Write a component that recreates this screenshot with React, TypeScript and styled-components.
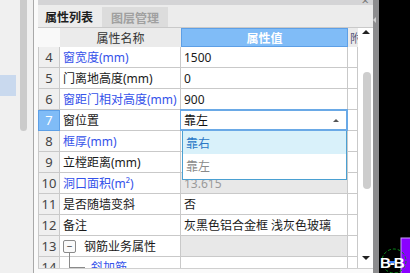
import styled, { createGlobalStyle } from "styled-components";

const GlobalStyle = createGlobalStyle`
  html, body {
    margin: 0;
    padding: 0;
    width: 410px;
    height: 273px;
    overflow: hidden;
    background: #f0f0f0;
  }
  body {
    font-family: "Noto Sans", "Noto Sans CJK SC", sans-serif;
    font-size: 12px;
  }
`;

type Row = {
  no: number;
  name: string;
  value?: string;
  blue?: boolean;
  muted?: boolean;
  group?: boolean;
  child?: boolean;
  select?: boolean;
};

const rows: Row[] = [
  { no: 4, name: "窗宽度(mm)", value: "1500", blue: true },
  { no: 5, name: "门离地高度(mm)", value: "0" },
  { no: 6, name: "窗距门相对高度(mm)", value: "900", blue: true },
  { no: 7, name: "窗位置", value: "靠左", select: true },
  { no: 8, name: "框厚(mm)", blue: true },
  { no: 9, name: "立樘距离(mm)" },
  { no: 10, name: "洞口面积(m²)", value: "13.615", blue: true, muted: true },
  { no: 11, name: "是否随墙变斜", value: "否" },
  { no: 12, name: "备注", value: "灰黑色铝合金框 浅灰色玻璃" },
  { no: 13, name: "钢筋业务属性", group: true, muted: true },
  { no: 14, name: "斜加筋", blue: true, child: true },
];

export default function App() {
  return (
    <Screen>
      <GlobalStyle />
      <LeftGutter>
        <GutterPane>
          <SelectedItem />
        </GutterPane>
        <GutterScroll />
        <GutterLine />
      </LeftGutter>

      <Panel>
        <TitleStrip>
          <CloseMark>×</CloseMark>
        </TitleStrip>
        <TabBar>
          <Tab $active>属性列表</Tab>
          <Tab>图层管理</Tab>
        </TabBar>

        <Body>
          <Table>
            <HeaderRow>
              <HeadCell $tone="plain" />
              <HeadCell $tone="gray">属性名称</HeadCell>
              <HeadCell $tone="blue">属性值</HeadCell>
              <HeadCell $tone="gray">附加</HeadCell>
            </HeaderRow>

            {rows.map((r) => (
              <GridRow key={r.no}>
                <IndexCell $active={r.select}>{r.no}</IndexCell>
                <NameCell $blue={r.blue} $child={r.child}>
                  {r.group && <Expander>−</Expander>}
                  {r.group && <TreeDown />}
                  {r.child && <TreeElbow />}
                  {r.name}
                </NameCell>
                <ValueCell $muted={r.muted}>
                  {r.select ? (
                    <>
                      <SelectBox>
                        {r.value}
                        <SelectArrow />
                      </SelectBox>
                      <DropList>
                        <DropItem $hover>靠右</DropItem>
                        <DropItem>靠左</DropItem>
                      </DropList>
                    </>
                  ) : (
                    r.value
                  )}
                </ValueCell>
                <ExtraCell />
              </GridRow>
            ))}
          </Table>

          <VScroll>
            <ScrollHead>
              <ArrowUp />
            </ScrollHead>
            <ScrollTrack>
              <Thumb />
            </ScrollTrack>
            <ScrollFoot>
              <ArrowDown />
            </ScrollFoot>
          </VScroll>
        </Body>
        <BottomStrip />
      </Panel>

      <Divider>
        <Notch />
      </Divider>

      <Canvas>
        <svg width="31" height="273" viewBox="0 0 31 273">
          <rect x="0" y="0" width="31" height="273" fill="#000" />
          <rect x="22" y="238" width="10" height="36" fill="#8a00ff" stroke="#c9a0ff" strokeWidth="1" />
          <circle cx="15" cy="261" r="12" fill="none" stroke="#0b8f1c" strokeWidth="1" strokeDasharray="3 2" />
          <line x1="9" y1="262" x2="17" y2="262" stroke="#3a7bff" strokeWidth="2" />
          <text x="1" y="268" fill="#fff" fontFamily="Liberation Sans" fontWeight="bold" fontSize="15" letterSpacing="-1">
            B-B
          </text>
        </svg>
      </Canvas>
    </Screen>
  );
}

const Screen = styled.div`
  display: flex;
  width: 410px;
  height: 273px;
  overflow: hidden;
`;

/* ---------- left gutter ---------- */

const LeftGutter = styled.div`
  display: flex;
  width: 38px;
  height: 273px;
  background: #f0f0f0;
`;

const GutterPane = styled.div`
  width: 20px;
  padding-top: 75px;
`;

const SelectedItem = styled.div`
  width: 16px;
  height: 21px;
  background: #c9d9ee;
`;

const GutterScroll = styled.div`
  width: 7px;
  height: 131px;
  background: #cbcbcb;
  border-radius: 0 0 4px 4px;
`;

const GutterLine = styled.div`
  width: 4px;
  margin-left: 6px;
  height: 273px;
  border-left: 1px solid #a9a9a9;
  background: #fafafa;
`;

/* ---------- panel ---------- */

const Panel = styled.div`
  display: flex;
  flex-direction: column;
  width: 335px;
  height: 273px;
  background: #fff;
`;

const TitleStrip = styled.div`
  position: relative;
  height: 5px;
  background: #d4d4d6;
  overflow: hidden;
`;

const CloseMark = styled.span`
  position: absolute;
  right: 4px;
  top: -9px;
  font-size: 13px;
  color: #777;
`;

const TabBar = styled.div`
  display: flex;
  align-items: flex-end;
  height: 22px;
  background: #ececec;
  border-bottom: 1px solid #c9c9c9;
`;

const Tab = styled.div<{ $active?: boolean }>`
  display: flex;
  align-items: center;
  justify-content: center;
  height: ${(p) => (p.$active ? "22px" : "20px")};
  width: ${(p) => (p.$active ? "62px" : "66px")};
  margin-right: 2px;
  box-sizing: border-box;
  background: ${(p) => (p.$active ? "#ececec" : "#dcdcdc")};
  color: ${(p) => (p.$active ? "#1e1e1e" : "#a0a0a0")};
  font-family: "Noto Sans CJK SC", sans-serif;
  font-weight: 600;
  font-size: 12px;
`;

const Body = styled.div`
  display: flex;
  height: 240px;
  overflow: hidden;
`;

const Table = styled.div`
  width: 320px;
  height: 240px;
  overflow: hidden;
  position: relative;
`;

const cols = "22px 121px 167px 10px";

const HeaderRow = styled.div`
  display: grid;
  grid-template-columns: ${cols};
  height: 19px;
`;

const HeadCell = styled.div<{ $tone: "plain" | "gray" | "blue" }>`
  display: flex;
  align-items: center;
  justify-content: ${(p) => (p.$tone === "blue" || p.$tone === "gray" ? "center" : "flex-start")};
  overflow: hidden;
  white-space: nowrap;
  box-sizing: border-box;
  font-family: "Noto Sans CJK SC", sans-serif;
  font-size: 12px;
  background: ${(p) => (p.$tone === "blue" ? "#80bcf7" : p.$tone === "gray" ? "#ebebeb" : "#f9f9f9")};
  color: ${(p) => (p.$tone === "blue" ? "#fff" : "#333")};
  font-weight: ${(p) => (p.$tone === "blue" ? 600 : 400)};
  border: ${(p) => (p.$tone === "blue" ? "1px solid #5d9fe6" : "none")};
  &:last-child {
    justify-content: flex-start;
    padding-left: 2px;
    color: #5a5a7a;
  }
`;

const GridRow = styled.div`
  display: grid;
  grid-template-columns: ${cols};
  height: 21px;
`;

const cellBase = `
  display: flex;
  align-items: center;
  box-sizing: border-box;
  height: 21px;
  border-right: 1px solid #c9c9c9;
  border-bottom: 1px solid #c9c9c9;
  white-space: nowrap;
`;

const IndexCell = styled.div<{ $active?: boolean }>`
  ${cellBase}
  justify-content: center;
  border-left: 1px solid #c9c9c9;
  font-size: 13px;
  background: ${(p) => (p.$active ? "#80bcf7" : "#efefef")};
  color: ${(p) => (p.$active ? "#fff" : "#444")};
  ${(p) => p.$active && "outline: 1px solid #5d9fe6; outline-offset: -1px;"}
`;

const NameCell = styled.div<{ $blue?: boolean; $child?: boolean }>`
  ${cellBase}
  position: relative;
  padding-left: ${(p) => (p.$child ? "31px" : "3px")};
  color: ${(p) => (p.$blue ? "#3552ea" : "#1a1a1a")};
  background: #fff;
`;

const ValueCell = styled.div<{ $muted?: boolean }>`
  ${cellBase}
  position: relative;
  padding-left: 3px;
  background: ${(p) => (p.$muted ? "#e8e8e8" : "#fff")};
  color: ${(p) => (p.$muted ? "#9a9a9a" : "#1a1a1a")};
`;

const ExtraCell = styled.div`
  ${cellBase}
  background: #fff;
`;

const Expander = styled.span`
  display: inline-flex;
  align-items: center;
  justify-content: center;
  width: 11px;
  height: 11px;
  margin-right: 8px;
  border: 1px solid #8a8a8a;
  border-radius: 2px;
  font-size: 10px;
  line-height: 1;
  color: #333;
  background: #fafafa;
`;

const TreeDown = styled.span`
  position: absolute;
  left: 9px;
  top: 17px;
  height: 6px;
  border-left: 1px solid #8a8a8a;
`;

const TreeElbow = styled.span`
  position: absolute;
  left: 9px;
  top: -1px;
  width: 15px;
  height: 11px;
  border-left: 1px solid #8a8a8a;
  border-bottom: 1px solid #8a8a8a;
`;

const SelectBox = styled.div`
  position: absolute;
  z-index: 2;
  left: -1px;
  top: -1px;
  right: -1px;
  bottom: -1px;
  display: flex;
  align-items: center;
  padding-left: 3px;
  background: #fff;
  color: #111;
  border: 2px solid #6aa9e6;
  border-left-width: 1px;
`;

const SelectArrow = styled.span`
  position: absolute;
  right: 7px;
  top: 8px;
  width: 0;
  height: 0;
  border-left: 3px solid transparent;
  border-right: 3px solid transparent;
  border-bottom: 3px solid #555;
`;

const DropList = styled.div`
  position: absolute;
  z-index: 3;
  left: 1px;
  top: 21px;
  width: 165px;
  height: 49px;
  box-sizing: border-box;
  background: #fff;
  border: 1px solid #4aa0d2;
  border-top: none;
`;

const DropItem = styled.div<{ $hover?: boolean }>`
  display: flex;
  align-items: center;
  height: 23px;
  padding-left: 3px;
  background: ${(p) => (p.$hover ? "#d9f1fa" : "#fff")};
  color: ${(p) => (p.$hover ? "#2a78c6" : "#8a8a8a")};
`;

/* ---------- scroll bar ---------- */

const VScroll = styled.div`
  display: flex;
  flex-direction: column;
  width: 15px;
  height: 240px;
  background: #fff;
`;

const ScrollHead = styled.div`
  height: 19px;
  display: flex;
  justify-content: center;
  padding-top: 2px;
  box-sizing: border-box;
`;

const ArrowUp = styled.span`
  width: 0;
  height: 0;
  border-left: 4px solid transparent;
  border-right: 4px solid transparent;
  border-bottom: 4px solid #222;
`;

const ScrollTrack = styled.div`
  flex: 1;
  padding-top: 25px;
`;

const Thumb = styled.div`
  width: 8px;
  height: 117px;
  margin-left: 5px;
  border-radius: 4px;
  background: #cdcdcd;
`;

const ScrollFoot = styled.div`
  height: 12px;
  display: flex;
  justify-content: center;
  align-items: flex-start;
  padding-top: 1px;
`;

const ArrowDown = styled.span`
  width: 0;
  height: 0;
  border-left: 4px solid transparent;
  border-right: 4px solid transparent;
  border-top: 4px solid #222;
`;

const BottomStrip = styled.div`
  flex: 1;
  background: #fafafa;
  border-top: 1px solid #cfcfcf;
`;

/* ---------- right side ---------- */

const Divider = styled.div`
  width: 6px;
  height: 273px;
  padding-top: 17px;
  box-sizing: border-box;
  background: #8c8c8e;
`;

const Notch = styled.div`
  width: 0;
  height: 0;
  border-top: 3px solid transparent;
  border-bottom: 3px solid transparent;
  border-right: 3px solid #d0d0d0;
`;

const Canvas = styled.div`
  width: 31px;
  height: 273px;
  background: #000;
`;
